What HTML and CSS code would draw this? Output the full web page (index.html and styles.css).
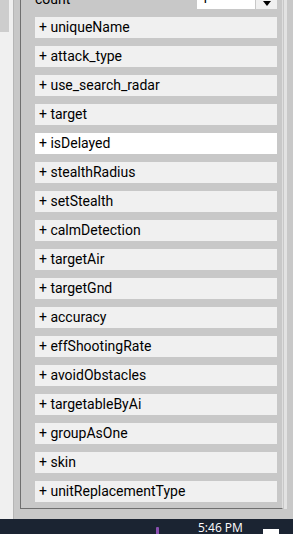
FILE: index.html
```html
<!DOCTYPE html>
<html>
<head>
<meta charset="utf-8">
<link rel="stylesheet" href="styles.css">
</head>
<body>
<div class="main">
  <div class="leftcol"><div class="thumb"></div></div>
  <div class="area">
    <div class="group">
      <div class="countrow">
        <span class="label">count</span>
        <div class="combo">
          <div class="field">1</div>
          <div class="btn"><span class="arrow"></span></div>
        </div>
      </div>
      <div class="item">+ uniqueName</div>
      <div class="item">+ attack_type</div>
      <div class="item">+ use_search_radar</div>
      <div class="item">+ target</div>
      <div class="item active">+ isDelayed</div>
      <div class="item">+ stealthRadius</div>
      <div class="item">+ setStealth</div>
      <div class="item">+ calmDetection</div>
      <div class="item">+ targetAir</div>
      <div class="item">+ targetGnd</div>
      <div class="item">+ accuracy</div>
      <div class="item">+ effShootingRate</div>
      <div class="item">+ avoidObstacles</div>
      <div class="item">+ targetableByAi</div>
      <div class="item">+ groupAsOne</div>
      <div class="item">+ skin</div>
      <div class="item">+ unitReplacementType</div>
    </div>
    <div class="rightcol"><div class="rline"></div></div>
  </div>
</div>
<div class="taskbar">
  <span class="tray-icon"></span>
  <span class="clock">5:46 PM</span>
  <span class="notif"></span>
</div>
</body>
</html>
```
FILE: styles.css
```css
html, body {
  margin: 0;
  padding: 0;
}
body {
  width: 293px;
  height: 534px;
  overflow: hidden;
  background: #f0f0f0;
  font-family: Roboto, "Liberation Sans", sans-serif;
}
.main {
  display: flex;
  height: 519px;
}
.leftcol {
  width: 13px;
  flex: none;
  background: #f0f0f0;
  display: flex;
  flex-direction: column;
}
.thumb {
  width: 9px;
  height: 32px;
  background: #cdcdcd;
}
.area {
  flex: 1;
  display: flex;
  background: #c8c8c8;
  border-left: 1px solid #b6b6b6;
  padding-left: 6px;
  padding-bottom: 10px;
  min-width: 0;
}
.group {
  width: 263px;
  box-sizing: border-box;
  flex: none;
  border-left: 1px solid #6f6f6f;
  border-bottom: 1px solid #6f6f6f;
  border-right: 1px solid #dedede;
  padding: 0 5px 0 14px;
  display: flex;
  flex-direction: column;
  gap: 8px;
  overflow: hidden;
}
.countrow {
  margin-top: -12px;
  height: 21px;
  flex: none;
  display: flex;
  align-items: center;
  justify-content: space-between;
  font-size: 14px;
  color: #000;
}
.combo {
  display: flex;
  gap: 1px;
  height: 21px;
}
.field {
  width: 58px;
  background: #fff;
  font-size: 14px;
  line-height: 21px;
  padding-left: 4px;
  box-sizing: border-box;
}
.btn {
  width: 21px;
  background: #f0f0f0;
  display: flex;
  align-items: flex-end;
  justify-content: center;
  padding-bottom: 3px;
  box-sizing: border-box;
}
.arrow {
  width: 0;
  height: 0;
  border-left: 4px solid transparent;
  border-right: 4px solid transparent;
  border-top: 5px solid #000;
}
.item {
  height: 21px;
  flex: none;
  background: #f0f0f0;
  font-size: 14px;
  line-height: 21px;
  padding-left: 4px;
  color: #000;
  white-space: nowrap;
}
.item.active {
  background: #fff;
}
.rightcol {
  flex: 1;
  display: flex;
  padding-left: 1px;
}
.rline {
  width: 3px;
  background: #e2e2e2;
}
.taskbar {
  height: 15px;
  background: #1b2432;
  position: relative;
  overflow: hidden;
}
.tray-icon {
  position: absolute;
  left: 156px;
  top: 8px;
  width: 3px;
  height: 8px;
  background: #8a4fb0;
  border-radius: 1px;
}
.clock {
  position: absolute;
  left: 198px;
  top: 2px;
  font-family: "Open Sans", "Liberation Sans", sans-serif;
  font-size: 12px;
  line-height: 14px;
  color: #fff;
}
.notif {
  position: absolute;
  left: 263px;
  top: 10px;
  width: 16px;
  height: 8px;
  background: #fff;
}
```
